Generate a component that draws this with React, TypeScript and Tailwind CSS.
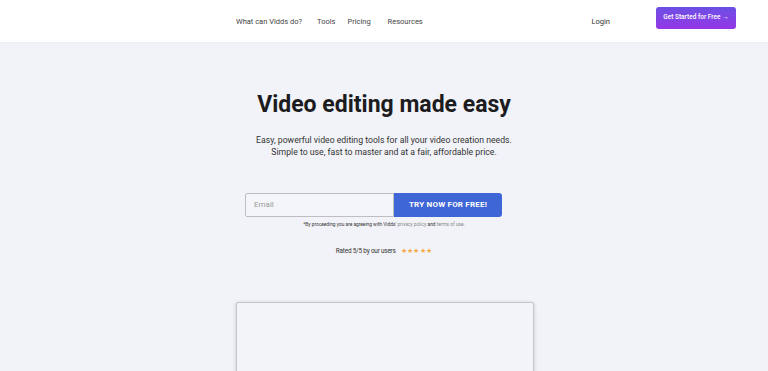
import React from "react";

export default function App() {
  return (
    <div className="min-h-[371px] bg-[#f2f3f8] font-['Roboto',sans-serif] text-[#222]">
      <header className="h-[42px] bg-white flex items-center pl-[236px] pr-[32px] shadow-[0_1px_2px_rgba(0,0,0,0.03)]">
        <nav className="flex items-center text-[7.5px] text-[#444] pt-[1px]">
          <span>What can Vidds do?</span>
          <span className="ml-[15px]">Tools</span>
          <span className="ml-[12px]">Pricing</span>
          <span className="ml-[17px]">Resources</span>
        </nav>
        <span className="ml-auto text-[7.5px] text-[#333] pt-[1px]">Login</span>
        <button className="self-start mt-[7px] ml-[46px] w-[80px] h-[22px] rounded-[3px] bg-gradient-to-b from-[#6a4fe4] to-[#9434e6] text-white text-[6.5px] font-medium">
          Get Started for Free →
        </button>
      </header>
      <main className="flex flex-col items-center">
        <h1 className="mt-[48px] text-[23px] leading-[30px] font-bold text-[#1c1c1e]">Video editing made easy</h1>
        <p className="mt-[14px] text-center text-[8.7px] leading-[12px] text-[#333]">
          Easy, powerful video editing tools for all your video creation needs.
          <br />
          Simple to use, fast to master and at a fair, affordable price.
        </p>
        <div className="mt-[35px] mr-[21px] flex">
          <div className="w-[149px] h-[24px] border border-[#bdbdc2] rounded-l-[2px] bg-[#f4f5f9] flex items-center px-[8px] text-[8px] text-[#999]">
            Email
          </div>
          <button className="w-[108px] h-[24px] bg-[#3f66d6] rounded-r-[3px] text-white text-[8px] font-bold tracking-[0.2px]">
            TRY NOW FOR FREE!
          </button>
        </div>
        <p className="mt-[4px] text-[4.8px] text-[#333]">
          *By proceeding you are agreeing with Vidds' <span className="text-[#888]">privacy policy</span> and <span className="text-[#888]">terms of use</span>.
        </p>
        <div className="mt-[18px] flex items-center gap-[5px] text-[6.4px] text-[#333]">
          <span className="tracking-[-0.2px]">Rated 5/5 by our users</span>
          <span className="text-[#f3a73f] text-[7px] tracking-[0.3px]">★★★★★</span>
        </div>
        <div className="mt-[45px] ml-[2px] w-[298px] h-[160px] bg-[#f3f4f8] border border-[#c6c6ca] rounded-[2px] shadow-[0_1px_4px_rgba(0,0,0,0.18)]" />
      </main>
    </div>
  );
}
